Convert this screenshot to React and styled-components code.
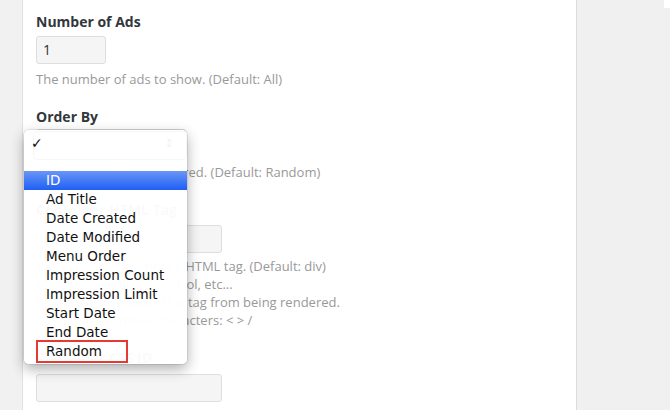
import React from "react";
import styled, { createGlobalStyle } from "styled-components";

const Global = createGlobalStyle`
  html, body { margin: 0; padding: 0; }
  body {
    width: 670px; height: 410px; overflow: hidden;
    background: #f1f1f1;
    font-family: "Open Sans", "Liberation Sans", sans-serif;
  }
`;

const Page = styled.div`
  display: flex;
  width: 670px;
  height: 410px;
  background: #f1f1f1;
  position: relative;
`;

const LeftGutter = styled.div`
  width: 22px;
  flex: none;
  background: #f1f1f1;
  border-right: 1px solid #e1e1e1;
`;

const Panel = styled.div`
  width: 554px;
  flex: none;
  background: #fff;
  border-right: 1px solid #dcdcdc;
  padding: 12px 0 0 13px;
  box-sizing: border-box;
  position: relative;
  display: flex;
  flex-direction: column;
  gap: 19px;
`;

const RightSide = styled.div`
  flex: 1;
  background: #f0f0f0;
  display: flex;
  justify-content: flex-end;
`;

const Corner = styled.div`
  width: 6px;
  height: 8px;
  background: #fff;
`;

const Field = styled.div`
  display: flex;
  flex-direction: column;
  align-items: flex-start;
`;

const Label = styled.div`
  font-size: 14px;
  font-weight: 700;
  line-height: 20px;
  color: #32373c;
`;

const Input = styled.div`
  width: ${(p) => p.$w}px;
  height: 28px;
  box-sizing: border-box;
  margin-top: ${(p) => p.$mt ?? 4}px;
  background: #f5f5f5;
  border: 1px solid #dedede;
  border-radius: 3px;
  font-size: 14px;
  line-height: 26px;
  padding-left: 6px;
  color: #333;
`;

const Help = styled.div`
  margin-top: ${(p) => p.$mt ?? 6}px;
  font-size: 13px;
  line-height: 18px;
  color: #999;
`;

const Popup = styled.div`
  position: absolute;
  left: 1px;
  top: 130px;
  width: 163px;
  height: 234px;
  box-sizing: border-box;
  background: rgba(255, 255, 255, 0.975);
  border-radius: 5px;
  box-shadow: 0 0 0 1px rgba(0, 0, 0, 0.08), 0 5px 14px rgba(0, 0, 0, 0.32);
  padding-top: 3px;
  font-family: "DejaVu Sans", "Liberation Sans", sans-serif;
  font-size: 13.5px;
  color: #111;
  overflow: hidden;
`;

const Ghost = styled.div`
  position: absolute;
  left: 9px;
  top: 1px;
  right: 0;
  height: 27px;
  border: 1px solid rgba(0, 0, 0, 0.03);
  border-radius: 4px;
`;

const GhostArrows = styled.span`
  position: absolute;
  right: 12px;
  top: 5px;
  font-size: 11px;
  color: rgba(0, 0, 0, 0.08);
`;

const Item = styled.div`
  position: relative;
  height: 19px;
  line-height: 19px;
  padding-left: 22px;
  white-space: nowrap;
  ${(p) =>
    p.$active &&
    `
    background: linear-gradient(#6b95f7, #1e5ff5);
    color: #fff;
  `}
`;

const Check = styled.span`
  position: absolute;
  left: 7px;
  top: 1px;
  font-size: 14px;
  font-weight: 700;
`;

const Marked = styled.span`
  display: inline-block;
  vertical-align: top;
  box-sizing: border-box;
  width: 92px;
  height: 23px;
  margin-left: -10px;
  margin-top: -2px;
  padding-left: 8px;
  border: 2px solid #e53a33;
  line-height: 19px;
`;

const options = [
  "ID",
  "Ad Title",
  "Date Created",
  "Date Modified",
  "Menu Order",
  "Impression Count",
  "Impression Limit",
  "Start Date",
  "End Date",
];

export default function App() {
  return (
    <>
      <Global />
      <Page>
        <LeftGutter />
        <Panel>
          <Field>
            <Label>Number of Ads</Label>
            <Input $w={70}>1</Input>
            <Help>The number of ads to show. (Default: All)</Help>
          </Field>
          <Field>
            <Label>Order By</Label>
            <Input $w={150} $mt={2} />
            <Help>How ads should be ordered. (Default: Random)</Help>
          </Field>
          <Field>
            <Label>Container HTML Tag</Label>
            <Input $w={186} $mt={5} />
            <Help $mt={4}>
              The container element's HTML tag. (Default: div)
              <br />
              For example: div, em, ul, ol, etc...
              <br />
              Leave blank to block this tag from being rendered.
              <br />
              Can't contain these characters: &lt; &gt; /
            </Help>
          </Field>
          <Field>
            <Label>Container CSS ID</Label>
            <Input $w={186} $mt={6} />
          </Field>
          <Popup>
            <Ghost>
              <GhostArrows>⇕</GhostArrows>
            </Ghost>
            <Item>
              <Check>✓</Check>
            </Item>
            <Item />
            {options.map((o, i) => (
              <Item key={o} $active={i === 0}>
                {o}
              </Item>
            ))}
            <Item>
              <Marked>Random</Marked>
            </Item>
          </Popup>
        </Panel>
        <RightSide>
          <Corner />
        </RightSide>
      </Page>
    </>
  );
}
